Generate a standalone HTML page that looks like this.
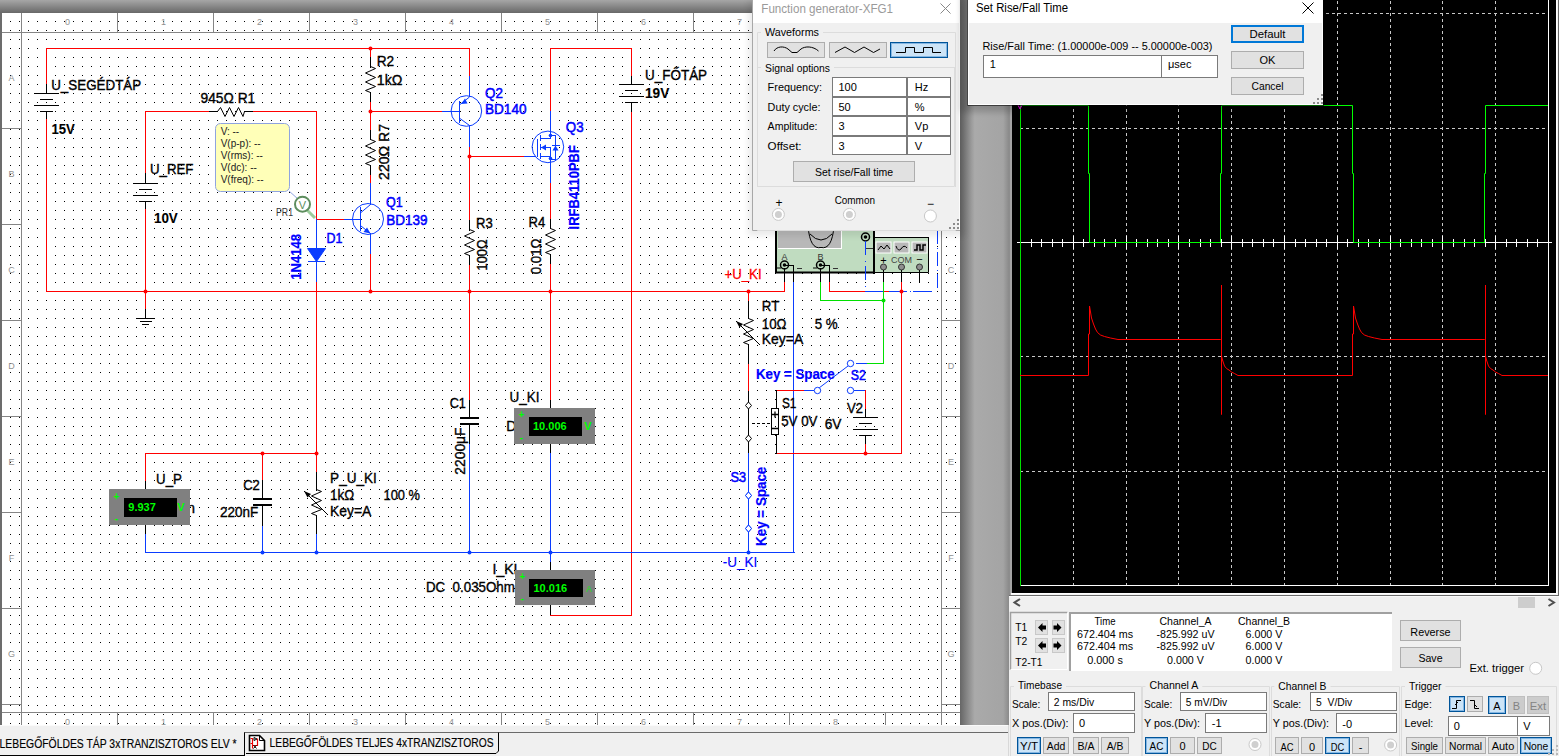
<!DOCTYPE html><html><head><meta charset="utf-8"><style>html,body{margin:0;padding:0;width:1559px;height:756px;overflow:hidden;background:#f0f0f0;font-family:"Liberation Sans",sans-serif}svg{display:block}text{font-family:"Liberation Sans",sans-serif}</style></head><body><svg width="1559" height="756" viewBox="0 0 1559 756" shape-rendering="auto"><defs><filter id="sh" x="-10%" y="-10%" width="120%" height="120%"><feGaussianBlur stdDeviation="3"/></filter></defs><rect x="0" y="0" width="1559" height="756" fill="#f0f0f0" />
<defs><linearGradient id="topbar" x1="0" y1="0" x2="0" y2="1"><stop offset="0" stop-color="#a6a6a6"/><stop offset="1" stop-color="#686868"/></linearGradient><linearGradient id="gapg" x1="0" y1="0" x2="1" y2="0"><stop offset="0" stop-color="#666"/><stop offset="0.3" stop-color="#aaa"/><stop offset="0.88" stop-color="#a4a4a4"/><stop offset="1" stop-color="#8a8a8a"/></linearGradient><pattern id="dots" x="10" y="3" width="9" height="9" patternUnits="userSpaceOnUse"><rect width="1" height="1" fill="#000"/></pattern></defs>
<rect x="0" y="0" width="960" height="13" fill="url(#topbar)" />
<rect x="0" y="13" width="2" height="712" fill="#6c6c6c" />
<rect x="2" y="13" width="958" height="712" fill="#ffffff" />
<rect x="2" y="13" width="958" height="712" fill="url(#dots)" />
<rect x="21" y="13" width="1" height="712" fill="#858585" />
<rect x="941" y="13" width="1" height="712" fill="#858585" />
<rect x="2" y="32" width="958" height="1" fill="#858585" />
<rect x="2" y="712" width="958" height="1" fill="#858585" />
<rect x="117" y="13" width="1" height="19" fill="#858585" />
<rect x="117" y="713" width="1" height="12" fill="#858585" />
<rect x="213" y="13" width="1" height="19" fill="#858585" />
<rect x="213" y="713" width="1" height="12" fill="#858585" />
<rect x="309" y="13" width="1" height="19" fill="#858585" />
<rect x="309" y="713" width="1" height="12" fill="#858585" />
<rect x="405" y="13" width="1" height="19" fill="#858585" />
<rect x="405" y="713" width="1" height="12" fill="#858585" />
<rect x="501" y="13" width="1" height="19" fill="#858585" />
<rect x="501" y="713" width="1" height="12" fill="#858585" />
<rect x="597" y="13" width="1" height="19" fill="#858585" />
<rect x="597" y="713" width="1" height="12" fill="#858585" />
<rect x="693" y="13" width="1" height="19" fill="#858585" />
<rect x="693" y="713" width="1" height="12" fill="#858585" />
<rect x="789" y="13" width="1" height="19" fill="#858585" />
<rect x="789" y="713" width="1" height="12" fill="#858585" />
<rect x="885" y="13" width="1" height="19" fill="#858585" />
<rect x="885" y="713" width="1" height="12" fill="#858585" />
<text x="67.5" y="24.5" font-size="9" fill="#909090" font-family="Liberation Sans" text-anchor="middle" >0</text>
<text x="67.5" y="724.5" font-size="9" fill="#909090" font-family="Liberation Sans" text-anchor="middle" >0</text>
<text x="163.5" y="24.5" font-size="9" fill="#909090" font-family="Liberation Sans" text-anchor="middle" >1</text>
<text x="163.5" y="724.5" font-size="9" fill="#909090" font-family="Liberation Sans" text-anchor="middle" >1</text>
<text x="259.5" y="24.5" font-size="9" fill="#909090" font-family="Liberation Sans" text-anchor="middle" >2</text>
<text x="259.5" y="724.5" font-size="9" fill="#909090" font-family="Liberation Sans" text-anchor="middle" >2</text>
<text x="355.5" y="24.5" font-size="9" fill="#909090" font-family="Liberation Sans" text-anchor="middle" >3</text>
<text x="355.5" y="724.5" font-size="9" fill="#909090" font-family="Liberation Sans" text-anchor="middle" >3</text>
<text x="451.5" y="24.5" font-size="9" fill="#909090" font-family="Liberation Sans" text-anchor="middle" >4</text>
<text x="451.5" y="724.5" font-size="9" fill="#909090" font-family="Liberation Sans" text-anchor="middle" >4</text>
<text x="547.5" y="24.5" font-size="9" fill="#909090" font-family="Liberation Sans" text-anchor="middle" >5</text>
<text x="547.5" y="724.5" font-size="9" fill="#909090" font-family="Liberation Sans" text-anchor="middle" >5</text>
<text x="643.5" y="24.5" font-size="9" fill="#909090" font-family="Liberation Sans" text-anchor="middle" >6</text>
<text x="643.5" y="724.5" font-size="9" fill="#909090" font-family="Liberation Sans" text-anchor="middle" >6</text>
<text x="739.5" y="24.5" font-size="9" fill="#909090" font-family="Liberation Sans" text-anchor="middle" >7</text>
<text x="739.5" y="724.5" font-size="9" fill="#909090" font-family="Liberation Sans" text-anchor="middle" >7</text>
<text x="835.5" y="24.5" font-size="9" fill="#909090" font-family="Liberation Sans" text-anchor="middle" >8</text>
<text x="835.5" y="724.5" font-size="9" fill="#909090" font-family="Liberation Sans" text-anchor="middle" >8</text>
<rect x="2" y="128" width="19" height="1" fill="#858585" />
<rect x="942" y="128" width="18" height="1" fill="#858585" />
<rect x="2" y="224" width="19" height="1" fill="#858585" />
<rect x="942" y="224" width="18" height="1" fill="#858585" />
<rect x="2" y="320" width="19" height="1" fill="#858585" />
<rect x="942" y="320" width="18" height="1" fill="#858585" />
<rect x="2" y="416" width="19" height="1" fill="#858585" />
<rect x="942" y="416" width="18" height="1" fill="#858585" />
<rect x="2" y="512" width="19" height="1" fill="#858585" />
<rect x="942" y="512" width="18" height="1" fill="#858585" />
<rect x="2" y="608" width="19" height="1" fill="#858585" />
<rect x="942" y="608" width="18" height="1" fill="#858585" />
<rect x="2" y="704" width="19" height="1" fill="#858585" />
<rect x="942" y="704" width="18" height="1" fill="#858585" />
<text x="11.5" y="80.5" font-size="9" fill="#909090" font-family="Liberation Sans" text-anchor="middle" >A</text>
<text x="951" y="80.5" font-size="9" fill="#909090" font-family="Liberation Sans" text-anchor="middle" >A</text>
<text x="11.5" y="176.5" font-size="9" fill="#909090" font-family="Liberation Sans" text-anchor="middle" >B</text>
<text x="951" y="176.5" font-size="9" fill="#909090" font-family="Liberation Sans" text-anchor="middle" >B</text>
<text x="11.5" y="272.5" font-size="9" fill="#909090" font-family="Liberation Sans" text-anchor="middle" >C</text>
<text x="951" y="272.5" font-size="9" fill="#909090" font-family="Liberation Sans" text-anchor="middle" >C</text>
<text x="11.5" y="368.5" font-size="9" fill="#909090" font-family="Liberation Sans" text-anchor="middle" >D</text>
<text x="951" y="368.5" font-size="9" fill="#909090" font-family="Liberation Sans" text-anchor="middle" >D</text>
<text x="11.5" y="464.5" font-size="9" fill="#909090" font-family="Liberation Sans" text-anchor="middle" >E</text>
<text x="951" y="464.5" font-size="9" fill="#909090" font-family="Liberation Sans" text-anchor="middle" >E</text>
<text x="11.5" y="560.5" font-size="9" fill="#909090" font-family="Liberation Sans" text-anchor="middle" >F</text>
<text x="951" y="560.5" font-size="9" fill="#909090" font-family="Liberation Sans" text-anchor="middle" >F</text>
<text x="11.5" y="656.5" font-size="9" fill="#909090" font-family="Liberation Sans" text-anchor="middle" >G</text>
<text x="951" y="656.5" font-size="9" fill="#909090" font-family="Liberation Sans" text-anchor="middle" >G</text>
<rect x="46" y="48" width="424" height="1" fill="#ff0000" />
<rect x="550" y="48" width="82" height="1" fill="#ff0000" />
<rect x="46" y="48" width="1" height="37" fill="#ff0000" />
<rect x="46" y="84" width="1" height="9" fill="#000000" />
<rect x="34" y="93" width="25" height="1" fill="#000000" />
<rect x="40" y="99" width="13" height="1" fill="#000000" />
<rect x="34" y="105" width="25" height="1" fill="#000000" />
<rect x="40" y="111" width="13" height="1" fill="#000000" />
<rect x="46" y="111" width="1" height="9" fill="#000000" />
<rect x="46" y="119" width="1" height="173" fill="#ff0000" />
<rect x="46" y="291" width="739" height="1" fill="#ff0000" />
<rect x="145" y="111" width="65" height="1" fill="#ff0000" />
<rect x="145" y="111" width="1" height="63" fill="#ff0000" />
<rect x="145" y="173" width="1" height="10" fill="#000000" />
<rect x="133" y="183" width="25" height="1" fill="#000000" />
<rect x="139" y="189" width="13" height="1" fill="#000000" />
<rect x="133" y="195" width="25" height="1" fill="#000000" />
<rect x="139" y="201" width="13" height="1" fill="#000000" />
<rect x="145" y="201" width="1" height="9" fill="#000000" />
<rect x="145" y="209" width="1" height="101" fill="#ff0000" />
<rect x="145" y="309" width="1" height="10" fill="#000000" />
<rect x="136" y="318" width="19" height="1" fill="#000000" />
<rect x="140" y="321" width="12" height="1" fill="#000000" />
<rect x="142" y="324" width="7" height="1" fill="#000000" />
<circle cx="145.5" cy="291.5" r="2.0" fill="#ff0000"/>
<rect x="209" y="111" width="9" height="1" fill="#000000" />
<path d="M217.5 111.5 L220.5 107.5 L225.0 116.5 L229.5 107.5 L234.0 116.5 L238.5 107.5 L243.0 116.5 L244.5 111.5" stroke="#000000" stroke-width="1" fill="none" />
<rect x="244" y="111" width="10" height="1" fill="#000000" />
<rect x="253" y="111" width="64" height="1" fill="#ff0000" />
<rect x="316" y="111" width="1" height="109" fill="#ff0000" />
<rect x="316" y="219" width="29" height="1" fill="#ff0000" />
<rect x="344" y="219" width="17" height="1" fill="#0a3cff" />
<rect x="316" y="219" width="1" height="30" fill="#0a3cff" />
<path d="M307.5 248.5 L325.5 248.5 L316.5 261.5 Z" fill="#0a3cff" stroke="#0a3cff" stroke-width="1"/>
<rect x="308" y="261" width="17" height="1" fill="#0a3cff" />
<rect x="316" y="261" width="1" height="22" fill="#0a3cff" />
<rect x="316" y="282" width="1" height="172" fill="#ff0000" />
<circle cx="370.5" cy="48.5" r="2.0" fill="#ff0000"/>
<rect x="370" y="48" width="1" height="10" fill="#ff0000" />
<rect x="370" y="57" width="1" height="11" fill="#000000" />
<path d="M370.5 66.5 L375.5 68.5 L365.5 73.0 L375.5 77.5 L365.5 82.0 L375.5 86.5 L365.5 90.5 L370.5 92.5" stroke="#000000" stroke-width="1" fill="none" />
<rect x="370" y="92" width="1" height="11" fill="#000000" />
<rect x="370" y="102" width="1" height="10" fill="#ff0000" />
<circle cx="370.5" cy="111.5" r="2.0" fill="#ff0000"/>
<rect x="370" y="111" width="73" height="1" fill="#ff0000" />
<rect x="442" y="111" width="18" height="1" fill="#0a3cff" />
<rect x="370" y="111" width="1" height="20" fill="#ff0000" />
<rect x="370" y="130" width="1" height="10" fill="#000000" />
<path d="M370.5 139.5 L375.5 141.5 L365.5 146.0 L375.5 150.5 L365.5 155.0 L375.5 159.5 L365.5 163.5 L370.5 165.5" stroke="#000000" stroke-width="1" fill="none" />
<rect x="370" y="165" width="1" height="11" fill="#000000" />
<rect x="370" y="175" width="1" height="9" fill="#ff0000" />
<rect x="370" y="183" width="1" height="22" fill="#0a3cff" />
<circle cx="368" cy="219" r="15.5" fill="none" stroke="#0a3cff" stroke-width="1"/>
<rect x="360" y="207" width="1" height="24" fill="#0a3cff" />
<path d="M361 212.5 L370.5 204.5" stroke="#0a3cff" stroke-width="1" fill="none" />
<path d="M361 226 L370.5 233.5" stroke="#0a3cff" stroke-width="1" fill="none" />
<path d="M370.5 233.5 L363.5 232 L367 227.5 Z" fill="#0a3cff"/>
<rect x="370" y="233" width="1" height="22" fill="#0a3cff" />
<rect x="370" y="254" width="1" height="38" fill="#ff0000" />
<circle cx="370.5" cy="291.5" r="2.0" fill="#ff0000"/>
<rect x="469" y="48" width="1" height="29" fill="#ff0000" />
<rect x="469" y="76" width="1" height="21" fill="#0a3cff" />
<circle cx="466.4" cy="111" r="15.3" fill="none" stroke="#0a3cff" stroke-width="1"/>
<rect x="459" y="101" width="1" height="22" fill="#0a3cff" />
<path d="M460 104.5 L469.5 97" stroke="#0a3cff" stroke-width="1" fill="none" />
<path d="M461 104 L467.5 103.5 L465 98.5 Z" fill="#0a3cff"/>
<path d="M460 118.5 L469.5 125.5" stroke="#0a3cff" stroke-width="1" fill="none" />
<rect x="469" y="125" width="1" height="23" fill="#0a3cff" />
<rect x="469" y="147" width="1" height="74" fill="#ff0000" />
<circle cx="469.5" cy="156.5" r="2.0" fill="#ff0000"/>
<rect x="469" y="156" width="56" height="1" fill="#ff0000" />
<rect x="524" y="156" width="12" height="1" fill="#0a3cff" />
<rect x="469" y="220" width="1" height="11" fill="#000000" />
<path d="M469.5 229.5 L474.5 231.5 L464.5 236.0 L474.5 240.5 L464.5 245.0 L474.5 249.5 L464.5 253.5 L469.5 255.5" stroke="#000000" stroke-width="1" fill="none" />
<rect x="469" y="255" width="1" height="11" fill="#000000" />
<rect x="469" y="265" width="1" height="136" fill="#ff0000" />
<circle cx="469.5" cy="291.5" r="2.0" fill="#ff0000"/>
<rect x="469" y="400" width="1" height="18" fill="#000000" />
<rect x="460" y="417" width="19" height="2" fill="#000000" />
<rect x="460" y="423" width="19" height="2" fill="#000000" />
<rect x="469" y="425" width="1" height="20" fill="#000000" />
<rect x="469" y="444" width="1" height="109" fill="#0a3cff" />
<rect x="550" y="48" width="1" height="64" fill="#ff0000" />
<rect x="550" y="111" width="1" height="25" fill="#0a3cff" />
<circle cx="547.9" cy="146.9" r="15.8" fill="none" stroke="#0a3cff" stroke-width="1"/>
<rect x="537" y="139" width="1" height="18" fill="#0a3cff" />
<rect x="540" y="135" width="1" height="6" fill="#0a3cff" />
<rect x="540" y="144" width="1" height="6" fill="#0a3cff" />
<rect x="540" y="153" width="1" height="6" fill="#0a3cff" />
<rect x="540" y="138" width="11" height="1" fill="#0a3cff" />
<rect x="550" y="135" width="1" height="4" fill="#0a3cff" />
<rect x="541" y="147" width="10" height="1" fill="#0a3cff" />
<rect x="550" y="147" width="1" height="13" fill="#0a3cff" />
<path d="M541 147.5 L546 144.5 L546 150.5 Z" fill="#0a3cff"/>
<rect x="540" y="156" width="11" height="1" fill="#0a3cff" />
<circle cx="550.5" cy="135.5" r="1.8" fill="#0a3cff"/>
<circle cx="550.5" cy="158.5" r="1.8" fill="#0a3cff"/>
<rect x="555" y="135" width="1" height="25" fill="#0a3cff" />
<rect x="550" y="135" width="6" height="1" fill="#0a3cff" />
<rect x="550" y="159" width="6" height="1" fill="#0a3cff" />
<path d="M552.5 150.5 L558.5 150.5 L555.5 145.5 Z" fill="#0a3cff"/>
<rect x="552" y="145" width="8" height="1" fill="#0a3cff" />
<rect x="550" y="158" width="1" height="26" fill="#0a3cff" />
<rect x="550" y="183" width="1" height="37" fill="#ff0000" />
<rect x="550" y="219" width="1" height="10" fill="#000000" />
<path d="M550.5 228.5 L555.5 230.5 L545.5 235.0 L555.5 239.5 L545.5 244.0 L555.5 248.5 L545.5 252.5 L550.5 254.5" stroke="#000000" stroke-width="1" fill="none" />
<rect x="550" y="254" width="1" height="11" fill="#000000" />
<rect x="550" y="264" width="1" height="137" fill="#ff0000" />
<circle cx="550.5" cy="291.5" r="2.0" fill="#ff0000"/>
<rect x="550" y="400" width="1" height="9" fill="#000000" />
<rect x="550" y="444" width="1" height="10" fill="#000000" />
<rect x="550" y="453" width="1" height="110" fill="#0a3cff" />
<rect x="550" y="562" width="1" height="9" fill="#000000" />
<rect x="550" y="605" width="1" height="11" fill="#000000" />
<rect x="550" y="615" width="82" height="1" fill="#ff0000" />
<rect x="631" y="48" width="1" height="29" fill="#ff0000" />
<rect x="631" y="76" width="1" height="9" fill="#000000" />
<rect x="619" y="84" width="25" height="1" fill="#000000" />
<rect x="625" y="90" width="13" height="1" fill="#000000" />
<rect x="619" y="96" width="25" height="1" fill="#000000" />
<rect x="625" y="102" width="13" height="1" fill="#000000" />
<rect x="631" y="103" width="1" height="10" fill="#000000" />
<rect x="631" y="112" width="1" height="504" fill="#ff0000" />
<rect x="145" y="552" width="650" height="1" fill="#0a3cff" />
<circle cx="262.5" cy="552.5" r="2.0" fill="#0a3cff"/>
<circle cx="316.5" cy="552.5" r="2.0" fill="#0a3cff"/>
<circle cx="469.5" cy="552.5" r="2.0" fill="#0a3cff"/>
<circle cx="550.5" cy="552.5" r="2.0" fill="#0a3cff"/>
<circle cx="748.5" cy="552.5" r="2.0" fill="#0a3cff"/>
<rect x="145" y="453" width="172" height="1" fill="#ff0000" />
<circle cx="262.5" cy="453.5" r="2.0" fill="#ff0000"/>
<circle cx="316.5" cy="453.5" r="2.0" fill="#ff0000"/>
<rect x="145" y="453" width="1" height="29" fill="#ff0000" />
<rect x="145" y="481" width="1" height="9" fill="#000000" />
<rect x="145" y="525" width="1" height="10" fill="#000000" />
<rect x="145" y="534" width="1" height="19" fill="#0a3cff" />
<rect x="262" y="453" width="1" height="28" fill="#ff0000" />
<rect x="262" y="480" width="1" height="19" fill="#000000" />
<rect x="253" y="498" width="19" height="2" fill="#000000" />
<rect x="253" y="504" width="19" height="2" fill="#000000" />
<rect x="262" y="506" width="1" height="21" fill="#000000" />
<rect x="262" y="526" width="1" height="27" fill="#0a3cff" />
<rect x="316" y="453" width="1" height="20" fill="#ff0000" />
<rect x="316" y="472" width="1" height="19" fill="#000000" />
<path d="M316.5 489.5 L321.5 491.5 L311.5 496.0 L321.5 500.5 L311.5 505.0 L321.5 509.5 L311.5 513.5 L316.5 515.5" stroke="#000000" stroke-width="1" fill="none" />
<rect x="316" y="515" width="1" height="20" fill="#000000" />
<rect x="316" y="534" width="1" height="19" fill="#0a3cff" />
<path d="M304 491 L328 515" stroke="#000000" stroke-width="1" fill="none" />
<path d="M304 491 L311 494 L307.5 497.5 Z" fill="#000"/>
<circle cx="748.5" cy="291.5" r="2.0" fill="#ff0000"/>
<rect x="748" y="291" width="1" height="11" fill="#ff0000" />
<rect x="748" y="301" width="1" height="18" fill="#000000" />
<path d="M748.5 318.5 L753.5 320.5 L743.5 325.0 L753.5 329.5 L743.5 334.0 L753.5 338.5 L743.5 342.5 L748.5 344.5" stroke="#000000" stroke-width="1" fill="none" />
<rect x="748" y="344" width="1" height="21" fill="#000000" />
<rect x="748" y="364" width="1" height="28" fill="#ff0000" />
<rect x="748" y="391" width="1" height="63" fill="#000000" />
<path d="M736 321 L760 345" stroke="#000000" stroke-width="1" fill="none" />
<path d="M736 321 L743 324 L739.5 327.5 Z" fill="#000"/>
<path d="M748.5 402 L751.5 405.5 L748.5 409 L745.5 405.5 Z" fill="#fff" stroke="#000000" stroke-width="1"/>
<path d="M748.5 435 L751.5 438.5 L748.5 442 L745.5 438.5 Z" fill="#fff" stroke="#000000" stroke-width="1"/>
<path d="M748.5 492 L751.5 495.5 L748.5 499 L745.5 495.5 Z" fill="#fff" stroke="#0a3cff" stroke-width="1"/>
<path d="M748.5 525 L751.5 528.5 L748.5 532 L745.5 528.5 Z" fill="#fff" stroke="#0a3cff" stroke-width="1"/>
<rect x="748" y="453" width="1" height="100" fill="#0a3cff" />
<path d="M748.5 492 L751.5 495.5 L748.5 499 L745.5 495.5 Z" fill="#fff" stroke="#0a3cff" stroke-width="1"/>
<path d="M748.5 525 L751.5 528.5 L748.5 532 L745.5 528.5 Z" fill="#fff" stroke="#0a3cff" stroke-width="1"/>
<rect x="775" y="200" width="99" height="73" fill="#c0dcc0" />
<path d="M776 200 L776 272.5 L874 272.5 L874 200" stroke="#000" stroke-width="2" fill="none" />
<rect x="778" y="200" width="63" height="48" fill="#b8b8b8" />
<rect x="778" y="248" width="64" height="1" fill="#ffffff" />
<rect x="841" y="200" width="1" height="49" fill="#ffffff" />
<path d="M808 226 Q 810 250 821 247.5 Q 832 250 834 226" stroke="#000" stroke-width="1" fill="none" />
<path d="M810 234 Q 821 246 832 234" stroke="#000" stroke-width="1" fill="none" />
<circle cx="784.5" cy="265" r="4" fill="#c0dcc0" stroke="#000" stroke-width="1.5"/><circle cx="784.5" cy="265" r="1.8" fill="#000"/>
<circle cx="820.5" cy="265" r="4" fill="#c0dcc0" stroke="#000" stroke-width="1.5"/><circle cx="820.5" cy="265" r="1.8" fill="#000"/>
<text x="784.5" y="260" font-size="9" fill="#333" font-family="Liberation Sans" text-anchor="middle" >A</text>
<text x="820.5" y="260" font-size="9" fill="#333" font-family="Liberation Sans" text-anchor="middle" >B</text>
<rect x="785" y="265" width="9" height="1" fill="#000000" />
<rect x="821" y="265" width="9" height="1" fill="#000000" />
<path d="M777 268 L781 268" stroke="#000" stroke-width="1" fill="none" />
<path d="M813 268 L817 268" stroke="#000" stroke-width="1" fill="none" />
<rect x="797" y="268" width="5" height="1" fill="#333" />
<rect x="833" y="268" width="5" height="1" fill="#333" />
<circle cx="865.5" cy="237" r="4" fill="#c0dcc0" stroke="#000" stroke-width="1.5"/><circle cx="865.5" cy="237" r="1.8" fill="#000"/>
<rect x="865" y="248" width="10" height="1" fill="#333" />
<rect x="874" y="237" width="54" height="36" fill="#c0dcc0" />
<path d="M874 237.5 L928.5 237.5 L928.5 272.5 L874 272.5" stroke="#000" stroke-width="1" fill="none" />
<rect x="873" y="237" width="2" height="37" fill="#000" />
<rect x="876" y="242" width="15" height="11" fill="#b8b8b8" stroke="#fff" stroke-width="1"/>
<rect x="894" y="242" width="15" height="11" fill="#b8b8b8" stroke="#fff" stroke-width="1"/>
<rect x="912" y="242" width="15" height="11" fill="#b8b8b8" stroke="#fff" stroke-width="1"/>
<path d="M878 250 L881 246 L884 249 L887 245 L890 249" stroke="#000" stroke-width="1" fill="none" />
<path d="M896 246 Q898 252 901 249 Q904 244 907 248" stroke="#000" stroke-width="1" fill="none" />
<path d="M914 250 L917 250 L917 245 L920 245 L920 250 L923 250 L923 245 L926 245" stroke="#000" stroke-width="1.5" fill="none" />
<text x="883.5" y="264" font-size="11" fill="#000" font-family="Liberation Sans" text-anchor="middle" >+</text>
<text x="901.5" y="263" font-size="9" fill="#444" font-family="Liberation Sans" text-anchor="middle" >COM</text>
<text x="919.5" y="263" font-size="11" fill="#000" font-family="Liberation Sans" text-anchor="middle" >−</text>
<circle cx="883.5" cy="267" r="3" fill="#909090" stroke="#333" stroke-width="1"/>
<rect x="883" y="270" width="1" height="13" fill="#000000" />
<circle cx="901.5" cy="267" r="3" fill="#909090" stroke="#333" stroke-width="1"/>
<rect x="901" y="270" width="1" height="13" fill="#000000" />
<circle cx="919.5" cy="267" r="3" fill="#909090" stroke="#333" stroke-width="1"/>
<rect x="919" y="270" width="1" height="13" fill="#000000" />
<rect x="784" y="268" width="1" height="15" fill="#000000" />
<rect x="784" y="282" width="1" height="10" fill="#ff0000" />
<rect x="793" y="265" width="1" height="18" fill="#000000" />
<rect x="793" y="282" width="1" height="271" fill="#0a3cff" />
<rect x="820" y="268" width="1" height="15" fill="#000000" />
<rect x="820" y="282" width="1" height="19" fill="#00e000" />
<rect x="820" y="300" width="64" height="1" fill="#00e000" />
<circle cx="883.5" cy="300.5" r="2.0" fill="#00e000"/>
<rect x="829" y="265" width="1" height="18" fill="#000000" />
<rect x="829" y="282" width="1" height="10" fill="#ff0000" />
<rect x="829" y="291" width="37" height="1" fill="#ff0000" />
<rect x="865" y="291" width="19" height="1" fill="#0a3cff" />
<rect x="883" y="291" width="7" height="1" fill="#ff0000" />
<rect x="889" y="291" width="18" height="1" fill="#0a3cff" />
<rect x="910" y="291" width="1" height="1" fill="#0a3cff" />
<rect x="913" y="291" width="19" height="1" fill="#0a3cff" />
<path d="M865.5 241 V291" stroke="#0a3cff" stroke-width="1" stroke-dasharray="14 6 1 4"/>
<path d="M937.5 230 V291" stroke="#0a3cff" stroke-width="1" stroke-dasharray="14 4 1 3"/>
<rect x="883" y="282" width="1" height="82" fill="#00e000" />
<rect x="901" y="282" width="1" height="172" fill="#ff0000" />
<circle cx="901.5" cy="291.5" r="2.0" fill="#ff0000"/>
<rect x="866" y="363" width="18" height="1" fill="#00e000" />
<rect x="856" y="363" width="11" height="1" fill="#0a3cff" />
<circle cx="850.5" cy="363.5" r="3.2" fill="#fff" stroke="#0a3cff"/>
<path d="M848 366 L819 388" stroke="#0a3cff" stroke-width="1" fill="none" />
<circle cx="817.5" cy="390.5" r="3.2" fill="#fff" stroke="#0a3cff"/>
<circle cx="850.5" cy="390.5" r="3.2" fill="#fff" stroke="#0a3cff"/>
<rect x="803" y="390" width="11" height="1" fill="#0a3cff" />
<rect x="776" y="390" width="28" height="1" fill="#ff0000" />
<rect x="854" y="390" width="12" height="1" fill="#0a3cff" />
<rect x="865" y="390" width="1" height="20" fill="#ff0000" />
<rect x="865" y="409" width="1" height="9" fill="#000000" />
<rect x="853" y="417" width="25" height="1" fill="#000000" />
<rect x="859" y="423" width="13" height="1" fill="#000000" />
<rect x="853" y="429" width="25" height="1" fill="#000000" />
<rect x="859" y="435" width="13" height="1" fill="#000000" />
<rect x="865" y="436" width="1" height="9" fill="#000000" />
<rect x="865" y="444" width="1" height="10" fill="#ff0000" />
<circle cx="865.5" cy="453.5" r="2.0" fill="#ff0000"/>
<rect x="776" y="453" width="126" height="1" fill="#ff0000" />
<rect x="776" y="390" width="1" height="19" fill="#000000" />
<rect x="776" y="434" width="1" height="20" fill="#000000" />
<rect x="771.5" y="408.5" width="7" height="26" fill="none" stroke="#000" stroke-width="1"/>
<path d="M772 414.5 H778 M775 411.5 V417.5 M772 428.5 H778" stroke="#000" stroke-width="1.3" fill="none" />
<path d="M752 423.5 H771" stroke="#000" stroke-width="1" stroke-dasharray="3 2"/>
<rect x="215.5" y="123.5" width="74" height="68" rx="5" fill="#ffffb8" stroke="#8fa4e0" stroke-width="1"/>
<text x="220.7" y="134.8" font-size="10" fill="#222" font-family="Liberation Sans" >V: --</text>
<text x="220.7" y="146.8" font-size="10" fill="#222" font-family="Liberation Sans" >V(p-p): --</text>
<text x="220.7" y="158.8" font-size="10" fill="#222" font-family="Liberation Sans" >V(rms): --</text>
<text x="220.7" y="170.8" font-size="10" fill="#222" font-family="Liberation Sans" >V(dc): --</text>
<text x="220.7" y="182.8" font-size="10" fill="#222" font-family="Liberation Sans" >V(freq): --</text>
<path d="M289 191 L298 199" stroke="#8fa4e0" stroke-width="1" fill="none" />
<path d="M307 210 L315 218" stroke="#9ccc9c" stroke-width="3" fill="none" />
<circle cx="302.5" cy="204.2" r="7.5" fill="#fff" stroke="#5e8e5e" stroke-width="2"/>
<text x="302.5" y="208.5" font-size="11" fill="#5e8e5e" font-family="Liberation Sans" text-anchor="middle" >V</text>
<text x="276" y="215.8" font-size="10" fill="#333" font-family="Liberation Sans" textLength="17" lengthAdjust="spacingAndGlyphs" >PR1</text>
<text x="51.2" y="89.6" font-size="14" fill="#000" font-family="Liberation Sans" textLength="90" lengthAdjust="spacingAndGlyphs" stroke="#000" stroke-width="0.35">U_SEGÉDTÁP</text>
<text x="51.5" y="134.4" font-size="14" fill="#000" font-family="Liberation Sans" textLength="23.4" lengthAdjust="spacingAndGlyphs" font-weight="bold" stroke="#000" stroke-width="0.1">15V</text>
<text x="200.5" y="102.7" font-size="14" fill="#000" font-family="Liberation Sans" textLength="54.8" lengthAdjust="spacingAndGlyphs" stroke="#000" stroke-width="0.35">945Ω R1</text>
<text x="149.9" y="173.6" font-size="14" fill="#000" font-family="Liberation Sans" textLength="43.6" lengthAdjust="spacingAndGlyphs" stroke="#000" stroke-width="0.35">U_REF</text>
<text x="154.0" y="223" font-size="14" fill="#000" font-family="Liberation Sans" textLength="23.8" lengthAdjust="spacingAndGlyphs" font-weight="bold" stroke="#000" stroke-width="0.1">10V</text>
<text x="376.7" y="66.4" font-size="14" fill="#000" font-family="Liberation Sans" textLength="17.5" lengthAdjust="spacingAndGlyphs" stroke="#000" stroke-width="0.35">R2</text>
<text x="376.7" y="84.5" font-size="14" fill="#000" font-family="Liberation Sans" textLength="25.8" lengthAdjust="spacingAndGlyphs" stroke="#000" stroke-width="0.35">1kΩ</text>
<text x="476.1" y="228.4" font-size="14" fill="#000" font-family="Liberation Sans" textLength="16.7" lengthAdjust="spacingAndGlyphs" stroke="#000" stroke-width="0.35">R3</text>
<text x="528.6" y="226.6" font-size="14" fill="#000" font-family="Liberation Sans" textLength="16.7" lengthAdjust="spacingAndGlyphs" stroke="#000" stroke-width="0.35">R4</text>
<text x="645.0" y="80.2" font-size="14" fill="#000" font-family="Liberation Sans" textLength="62.1" lengthAdjust="spacingAndGlyphs" stroke="#000" stroke-width="0.35">U_FŐTÁP</text>
<text x="645.0" y="98.1" font-size="14" fill="#000" font-family="Liberation Sans" textLength="24.3" lengthAdjust="spacingAndGlyphs" font-weight="bold" stroke="#000" stroke-width="0.1">19V</text>
<text x="156.1" y="483.9" font-size="14" fill="#000" font-family="Liberation Sans" textLength="25.8" lengthAdjust="spacingAndGlyphs" stroke="#000" stroke-width="0.35">U_P</text>
<text x="243.2" y="489.6" font-size="14" fill="#000" font-family="Liberation Sans" textLength="16.7" lengthAdjust="spacingAndGlyphs" stroke="#000" stroke-width="0.35">C2</text>
<text x="220.1" y="516.9" font-size="14" fill="#000" font-family="Liberation Sans" textLength="38.2" lengthAdjust="spacingAndGlyphs" stroke="#000" stroke-width="0.35">220nF</text>
<text x="330.1" y="482.6" font-size="14" fill="#000" font-family="Liberation Sans" textLength="46.8" lengthAdjust="spacingAndGlyphs" stroke="#000" stroke-width="0.35">P_U_KI</text>
<text x="330.1" y="500.3" font-size="14" fill="#000" font-family="Liberation Sans" textLength="24.1" lengthAdjust="spacingAndGlyphs" stroke="#000" stroke-width="0.35">1kΩ</text>
<text x="383.5" y="500.3" font-size="14" fill="#000" font-family="Liberation Sans" textLength="36.4" lengthAdjust="spacingAndGlyphs" stroke="#000" stroke-width="0.35">100 %</text>
<text x="330.1" y="515.5" font-size="14" fill="#000" font-family="Liberation Sans" textLength="41.2" lengthAdjust="spacingAndGlyphs" stroke="#000" stroke-width="0.35">Key=A</text>
<text x="449.7" y="408.4" font-size="14" fill="#000" font-family="Liberation Sans" textLength="16.2" lengthAdjust="spacingAndGlyphs" stroke="#000" stroke-width="0.35">C1</text>
<text x="509.5" y="402" font-size="14" fill="#000" font-family="Liberation Sans" textLength="29.9" lengthAdjust="spacingAndGlyphs" stroke="#000" stroke-width="0.35">U_KI</text>
<text x="506.3" y="431.2" font-size="14" fill="#000" font-family="Liberation Sans" textLength="10" lengthAdjust="spacingAndGlyphs" stroke="#000" stroke-width="0.35">D</text>
<text x="492.5" y="574" font-size="14" fill="#000" font-family="Liberation Sans" textLength="25" lengthAdjust="spacingAndGlyphs" stroke="#000" stroke-width="0.35">I_KI</text>
<text x="425.9" y="592.2" font-size="14" fill="#000" font-family="Liberation Sans" textLength="89" lengthAdjust="spacingAndGlyphs" stroke="#000" stroke-width="0.35">DC  0.035Ohm</text>
<text x="761.8" y="311.1" font-size="14" fill="#000" font-family="Liberation Sans" textLength="17.5" lengthAdjust="spacingAndGlyphs" stroke="#000" stroke-width="0.35">RT</text>
<text x="761.8" y="329.2" font-size="14" fill="#000" font-family="Liberation Sans" textLength="24.7" lengthAdjust="spacingAndGlyphs" stroke="#000" stroke-width="0.35">10Ω</text>
<text x="814.7" y="329.2" font-size="14" fill="#000" font-family="Liberation Sans" textLength="23" lengthAdjust="spacingAndGlyphs" stroke="#000" stroke-width="0.35">5 %</text>
<text x="761.8" y="343.8" font-size="14" fill="#000" font-family="Liberation Sans" textLength="41.4" lengthAdjust="spacingAndGlyphs" stroke="#000" stroke-width="0.35">Key=A</text>
<text x="782.0" y="408" font-size="14" fill="#000" font-family="Liberation Sans" textLength="14.4" lengthAdjust="spacingAndGlyphs" stroke="#000" stroke-width="0.35">S1</text>
<text x="781.2" y="426" font-size="14" fill="#000" font-family="Liberation Sans" textLength="36.3" lengthAdjust="spacingAndGlyphs" stroke="#000" stroke-width="0.35">5V 0V</text>
<text x="824.7" y="429" font-size="14" fill="#000" font-family="Liberation Sans" textLength="16.8" lengthAdjust="spacingAndGlyphs" stroke="#000" stroke-width="0.35">6V</text>
<text x="847.0" y="413.1" font-size="14" fill="#000" font-family="Liberation Sans" textLength="16" lengthAdjust="spacingAndGlyphs" stroke="#000" stroke-width="0.35">V2</text>
<text x="187.0" y="513" font-size="14" fill="#000" font-family="Liberation Sans" textLength="8" lengthAdjust="spacingAndGlyphs" stroke="#000" stroke-width="0.35">n</text>
<text x="389.3" y="179.9" font-size="14" fill="#000" font-family="Liberation Sans" textLength="55.900000000000006" lengthAdjust="spacingAndGlyphs" transform="rotate(-90 389.3 179.9)" stroke="#000" stroke-width="0.35">220Ω R7</text>
<text x="487.4" y="270.5" font-size="14" fill="#000" font-family="Liberation Sans" textLength="31" lengthAdjust="spacingAndGlyphs" transform="rotate(-90 487.4 270.5)" stroke="#000" stroke-width="0.35">100Ω</text>
<text x="540.8" y="274.3" font-size="14" fill="#000" font-family="Liberation Sans" textLength="35.80000000000001" lengthAdjust="spacingAndGlyphs" transform="rotate(-90 540.8 274.3)" stroke="#000" stroke-width="0.35">0.01Ω</text>
<text x="465.5" y="474.7" font-size="14" fill="#000" font-family="Liberation Sans" textLength="47.19999999999999" lengthAdjust="spacingAndGlyphs" transform="rotate(-90 465.5 474.7)" stroke="#000" stroke-width="0.35">2200μF</text>
<text x="386.0" y="206.9" font-size="14" fill="#0000ff" font-family="Liberation Sans" textLength="16.7" lengthAdjust="spacingAndGlyphs" stroke="#0000ff" stroke-width="0.5">Q1</text>
<text x="386.3" y="224.9" font-size="14" fill="#0000ff" font-family="Liberation Sans" textLength="41.3" lengthAdjust="spacingAndGlyphs" stroke="#0000ff" stroke-width="0.5">BD139</text>
<text x="485.0" y="98" font-size="14" fill="#0000ff" font-family="Liberation Sans" textLength="17.9" lengthAdjust="spacingAndGlyphs" stroke="#0000ff" stroke-width="0.5">Q2</text>
<text x="485.0" y="114.3" font-size="14" fill="#0000ff" font-family="Liberation Sans" textLength="41.5" lengthAdjust="spacingAndGlyphs" stroke="#0000ff" stroke-width="0.5">BD140</text>
<text x="565.8" y="132.4" font-size="14" fill="#0000ff" font-family="Liberation Sans" textLength="17.8" lengthAdjust="spacingAndGlyphs" stroke="#0000ff" stroke-width="0.5">Q3</text>
<text x="326.5" y="242.5" font-size="14" fill="#0000ff" font-family="Liberation Sans" textLength="15.9" lengthAdjust="spacingAndGlyphs" stroke="#0000ff" stroke-width="0.5">D1</text>
<text x="850.8" y="380.4" font-size="14" fill="#0000ff" font-family="Liberation Sans" textLength="15.1" lengthAdjust="spacingAndGlyphs" stroke="#0000ff" stroke-width="0.5">S2</text>
<text x="730.5" y="482.3" font-size="14" fill="#0000ff" font-family="Liberation Sans" textLength="15.6" lengthAdjust="spacingAndGlyphs" stroke="#0000ff" stroke-width="0.5">S3</text>
<text x="722.7" y="567" font-size="14" fill="#0000ff" font-family="Liberation Sans" textLength="34.5" lengthAdjust="spacingAndGlyphs" stroke="#0000ff" stroke-width="0.15">-U_KI</text>
<text x="755.9" y="378.7" font-size="14" fill="#0000ff" font-family="Liberation Sans" textLength="78.7" lengthAdjust="spacingAndGlyphs" font-weight="bold" stroke="#0000ff" stroke-width="0.2">Key = Space</text>
<text x="579" y="229.4" font-size="14" fill="#0000ff" font-family="Liberation Sans" textLength="84.20000000000002" lengthAdjust="spacingAndGlyphs" font-weight="bold" transform="rotate(-90 579 229.4)" stroke="#0000ff" stroke-width="0.2">IRFB4110PBF</text>
<text x="301.4" y="279.7" font-size="14" fill="#0000ff" font-family="Liberation Sans" textLength="45.69999999999999" lengthAdjust="spacingAndGlyphs" font-weight="bold" transform="rotate(-90 301.4 279.7)" stroke="#0000ff" stroke-width="0.2">1N4148</text>
<text x="766" y="545.9" font-size="14" fill="#0000ff" font-family="Liberation Sans" textLength="79.19999999999999" lengthAdjust="spacingAndGlyphs" font-weight="bold" transform="rotate(-90 766 545.9)" stroke="#0000ff" stroke-width="0.2">Key = Space</text>
<text x="724.5" y="278.5" font-size="14" fill="#ff0000" font-family="Liberation Sans" textLength="37.1" lengthAdjust="spacingAndGlyphs" stroke="#ff0000" stroke-width="0.3">+U_KI</text>
<rect x="514" y="408" width="81" height="36" fill="#808080" />
<rect x="529" y="417" width="53" height="19" fill="#000" />
<text x="533" y="429.6" font-size="11" fill="#00ff00" font-family="Liberation Sans" font-weight="bold" >10.006</text>
<text x="521.5" y="418" font-size="10" fill="#00ff00" font-family="Liberation Sans" font-weight="bold" text-anchor="middle" >+</text>
<text x="521.5" y="441" font-size="10" fill="#00ff00" font-family="Liberation Sans" font-weight="bold" text-anchor="middle" >-</text>
<text x="588" y="429.6" font-size="11" fill="#00ff00" font-family="Liberation Sans" font-weight="bold" text-anchor="middle" >V</text>
<rect x="515" y="570" width="80" height="35" fill="#808080" />
<rect x="529" y="579" width="54" height="18" fill="#000" />
<text x="533.5" y="591.7" font-size="11" fill="#00ff00" font-family="Liberation Sans" font-weight="bold" >10.016</text>
<text x="522.5" y="580" font-size="10" fill="#00ff00" font-family="Liberation Sans" font-weight="bold" text-anchor="middle" >+</text>
<text x="522.5" y="602" font-size="10" fill="#00ff00" font-family="Liberation Sans" font-weight="bold" text-anchor="middle" >-</text>
<text x="589" y="591.7" font-size="9" fill="#40c040" font-family="Liberation Sans" font-weight="bold" text-anchor="middle" >A</text>
<rect x="109" y="489" width="81" height="36" fill="#808080" />
<rect x="124" y="498" width="53" height="19" fill="#000" />
<text x="128.3" y="510.7" font-size="11" fill="#00ff00" font-family="Liberation Sans" font-weight="bold" >9.937</text>
<text x="116.5" y="500" font-size="10" fill="#00ff00" font-family="Liberation Sans" font-weight="bold" text-anchor="middle" >+</text>
<text x="116.5" y="522" font-size="10" fill="#00ff00" font-family="Liberation Sans" font-weight="bold" text-anchor="middle" >-</text>
<text x="181" y="510.7" font-size="11" fill="#00ff00" font-family="Liberation Sans" font-weight="bold" text-anchor="middle" >V</text>
<rect x="960" y="0" width="49" height="725" fill="url(#gapg)" />
<rect x="0" y="725" width="1009" height="31" fill="#f0f0f0" />
<rect x="0" y="725" width="1009" height="1" fill="#fafafa" />
<rect x="244" y="732" width="765" height="1" fill="#6a6a6a" />
<rect x="0" y="755" width="245" height="1" fill="#000000" />
<text x="-0.5" y="747.5" font-size="13" fill="#000" font-family="Liberation Sans" textLength="237" lengthAdjust="spacingAndGlyphs" stroke="#000" stroke-width="0.15">LEBEGŐFÖLDES TÁP 3xTRANZISZTOROS ELV *</text>
<path d="M244.5 755 V732.5 M498.5 732.5 V751 L496 753.5 H246" fill="none" stroke="#000" stroke-width="1"/>
<path d="M249.5 735.5 H259.5 L264.5 740.5 V750.5 H249.5 Z" fill="#fff" stroke="#000" stroke-width="1.6"/>
<path d="M259.5 735.5 V740.5 H264.5" stroke="#000" stroke-width="1" fill="none" />
<path d="M250.5 738.5 H253 M252.5 738.5 V748.5 M250.5 743.5 H252.5 M257.5 738.5 V745.5 H253" stroke="#e00" stroke-width="1.2" fill="none" />
<path d="M254 737.5 L257 739 L254 740.5 Z M253.5 745 L256.5 748.5 M256.5 745 L253.5 748.5" stroke="#000" stroke-width="1" fill="none" />
<text x="269.6" y="746.7" font-size="13" fill="#000" font-family="Liberation Sans" textLength="224" lengthAdjust="spacingAndGlyphs" stroke="#000" stroke-width="0.15">LEBEGŐFÖLDES TELJES 4xTRANZISZTOROS</text>
<rect x="1009" y="0" width="550" height="756" fill="#f0f0f0" />
<rect x="1009" y="0" width="3" height="595" fill="#a4a4a4" />
<rect x="1009" y="0" width="1" height="596" fill="#8c8c8c" />
<rect x="1012" y="0" width="544" height="593" fill="#000" />
<rect x="1011" y="593" width="547" height="1" fill="#ffffff" />
<rect x="1011" y="594" width="547" height="1" fill="#f4f4f4" />
<rect x="1556" y="0" width="1" height="595" fill="#ffffff" />
<rect x="1557" y="0" width="1" height="595" fill="#f4f4f4" />
<rect x="1009" y="595" width="550" height="1" fill="#6a6a6a" />
<rect x="1558" y="0" width="1" height="596" fill="#6a6a6a" />
<rect x="1009" y="596" width="550" height="1" fill="#fafafa" />
<path d="M1073.5 1 V585" stroke="#c8c8c8" stroke-width="1" stroke-dasharray="3 3"/>
<path d="M1126.5 1 V585" stroke="#c8c8c8" stroke-width="1" stroke-dasharray="3 3"/>
<path d="M1178.5 1 V585" stroke="#c8c8c8" stroke-width="1" stroke-dasharray="3 3"/>
<path d="M1231.5 1 V585" stroke="#c8c8c8" stroke-width="1" stroke-dasharray="3 3"/>
<path d="M1284.5 1 V585" stroke="#c8c8c8" stroke-width="1" stroke-dasharray="3 3"/>
<path d="M1337.5 1 V585" stroke="#c8c8c8" stroke-width="1" stroke-dasharray="3 3"/>
<path d="M1390.5 1 V585" stroke="#c8c8c8" stroke-width="1" stroke-dasharray="3 3"/>
<path d="M1442.5 1 V585" stroke="#c8c8c8" stroke-width="1" stroke-dasharray="3 3"/>
<path d="M1495.5 1 V585" stroke="#c8c8c8" stroke-width="1" stroke-dasharray="3 3"/>
<path d="M1020 13.5 H1548" stroke="#c8c8c8" stroke-width="1" stroke-dasharray="3 3"/>
<path d="M1020 128.5 H1548" stroke="#c8c8c8" stroke-width="1" stroke-dasharray="3 3"/>
<path d="M1020 356.5 H1548" stroke="#c8c8c8" stroke-width="1" stroke-dasharray="3 3"/>
<path d="M1020 471.5 H1548" stroke="#c8c8c8" stroke-width="1" stroke-dasharray="3 3"/>
<rect x="1020" y="585" width="529" height="1" fill="#ffffff" />
<rect x="1548" y="0" width="1" height="586" fill="#ffffff" />
<rect x="1017" y="242" width="535" height="1" fill="#ffffff" />
<rect x="1020" y="236" width="1" height="13" fill="#ffffff" />
<rect x="1031" y="239" width="1" height="8" fill="#ffffff" />
<rect x="1041" y="239" width="1" height="8" fill="#ffffff" />
<rect x="1052" y="239" width="1" height="8" fill="#ffffff" />
<rect x="1062" y="239" width="1" height="8" fill="#ffffff" />
<rect x="1073" y="236" width="1" height="13" fill="#ffffff" />
<rect x="1083" y="239" width="1" height="8" fill="#ffffff" />
<rect x="1094" y="239" width="1" height="8" fill="#ffffff" />
<rect x="1104" y="239" width="1" height="8" fill="#ffffff" />
<rect x="1115" y="239" width="1" height="8" fill="#ffffff" />
<rect x="1126" y="236" width="1" height="13" fill="#ffffff" />
<rect x="1136" y="239" width="1" height="8" fill="#ffffff" />
<rect x="1147" y="239" width="1" height="8" fill="#ffffff" />
<rect x="1157" y="239" width="1" height="8" fill="#ffffff" />
<rect x="1168" y="239" width="1" height="8" fill="#ffffff" />
<rect x="1178" y="236" width="1" height="13" fill="#ffffff" />
<rect x="1189" y="239" width="1" height="8" fill="#ffffff" />
<rect x="1200" y="239" width="1" height="8" fill="#ffffff" />
<rect x="1210" y="239" width="1" height="8" fill="#ffffff" />
<rect x="1221" y="239" width="1" height="8" fill="#ffffff" />
<rect x="1231" y="236" width="1" height="13" fill="#ffffff" />
<rect x="1242" y="239" width="1" height="8" fill="#ffffff" />
<rect x="1252" y="239" width="1" height="8" fill="#ffffff" />
<rect x="1263" y="239" width="1" height="8" fill="#ffffff" />
<rect x="1273" y="239" width="1" height="8" fill="#ffffff" />
<rect x="1284" y="236" width="1" height="13" fill="#ffffff" />
<rect x="1295" y="239" width="1" height="8" fill="#ffffff" />
<rect x="1305" y="239" width="1" height="8" fill="#ffffff" />
<rect x="1316" y="239" width="1" height="8" fill="#ffffff" />
<rect x="1326" y="239" width="1" height="8" fill="#ffffff" />
<rect x="1337" y="236" width="1" height="13" fill="#ffffff" />
<rect x="1347" y="239" width="1" height="8" fill="#ffffff" />
<rect x="1358" y="239" width="1" height="8" fill="#ffffff" />
<rect x="1368" y="239" width="1" height="8" fill="#ffffff" />
<rect x="1379" y="239" width="1" height="8" fill="#ffffff" />
<rect x="1390" y="236" width="1" height="13" fill="#ffffff" />
<rect x="1400" y="239" width="1" height="8" fill="#ffffff" />
<rect x="1411" y="239" width="1" height="8" fill="#ffffff" />
<rect x="1421" y="239" width="1" height="8" fill="#ffffff" />
<rect x="1432" y="239" width="1" height="8" fill="#ffffff" />
<rect x="1442" y="236" width="1" height="13" fill="#ffffff" />
<rect x="1453" y="239" width="1" height="8" fill="#ffffff" />
<rect x="1464" y="239" width="1" height="8" fill="#ffffff" />
<rect x="1474" y="239" width="1" height="8" fill="#ffffff" />
<rect x="1485" y="239" width="1" height="8" fill="#ffffff" />
<rect x="1495" y="236" width="1" height="13" fill="#ffffff" />
<rect x="1506" y="239" width="1" height="8" fill="#ffffff" />
<rect x="1516" y="239" width="1" height="8" fill="#ffffff" />
<rect x="1527" y="239" width="1" height="8" fill="#ffffff" />
<rect x="1537" y="239" width="1" height="8" fill="#ffffff" />
<rect x="1548" y="236" width="1" height="13" fill="#ffffff" />
<rect x="1020" y="105" width="1" height="481" fill="#00e000" />
<path d="M1020.5 105.5 H1088.5 V173.5 H1089.5 V242.5 H1220.5 V173.5 H1221.5 V105.5 H1352.5 V173.5 H1353.5 V242.5 H1484.5 V173.5 H1485.5 V105.5 H1548" stroke="#00ff00" stroke-width="1" fill="none" />
<path d="M1020 375.5 H1088.5 V334 L1089.5 334 L1089.5 306 L1090.5 312 L1091.5 318 L1093.5 324 L1095.5 329 L1097.5 332.5 L1100.5 335 L1104.5 336.5 L1110.5 338 L1118 339.5 H1220.5 V339.5 L1221.5 339.5 L1221.5 285 L1221.5 414.5 L1221.5 356 L1222.5 360 L1223.5 363 L1224.5 366 L1226.5 368.5 L1229 370 L1231.5 372 L1234.5 373.5 L1238 375.5 H1352.5 V334 L1353.5 334 L1353.5 306 L1354.5 312 L1355.5 318 L1357.5 324 L1359.5 329 L1361.5 332.5 L1364.5 335 L1368.5 336.5 L1374.5 338 L1382 339.5 H1484.5 V339.5 L1485.5 339.5 L1485.5 285 L1485.5 414.5 L1485.5 356 L1486.5 360 L1487.5 363 L1488.5 366 L1490.5 368.5 L1493 370 L1495.5 372 L1498.5 373.5 L1502 375.5 H1548" stroke="#ff0000" stroke-width="1" fill="none" stroke-linejoin="round"/>
<path d="M1017 103 L1023 103 L1020 109 Z" fill="none" stroke="#ff00ff" stroke-width="1"/>
<path d="M1020 599 L1014.5 602.5 L1020 606" stroke="#505050" stroke-width="2" fill="none" />
<rect x="1518" y="597" width="17" height="11" fill="#cdcdcd" />
<path d="M1548.5 599 L1554 602.5 L1548.5 606" stroke="#505050" stroke-width="2" fill="none" />
<rect x="1008" y="725" width="1" height="32" fill="#d8d8d8" />
<path d="M1010.5 670 V612.5 H1067.5" fill="none" stroke="#a0a0a0" stroke-width="1.5"/>
<path d="M1067.5 612.5 V669.5 H1010.5" fill="none" stroke="#ffffff" stroke-width="1"/>
<text x="1015.2" y="630.5" font-size="11" fill="#000" font-family="Liberation Sans" textLength="12" lengthAdjust="spacingAndGlyphs" >T1</text>
<text x="1015.2" y="645.3" font-size="11" fill="#000" font-family="Liberation Sans" textLength="12" lengthAdjust="spacingAndGlyphs" >T2</text>
<text x="1015.2" y="665.6" font-size="11" fill="#000" font-family="Liberation Sans" textLength="27.3" lengthAdjust="spacingAndGlyphs" >T2-T1</text>
<rect x="1035.5" y="620.5" width="12" height="14" fill="#e1e1e1" stroke="#c8c8c8" stroke-width="1"/>
<rect x="1052.5" y="620.5" width="12" height="14" fill="#e1e1e1" stroke="#c8c8c8" stroke-width="1"/>
<rect x="1035.5" y="638.5" width="12" height="14" fill="#e1e1e1" stroke="#c8c8c8" stroke-width="1"/>
<rect x="1052.5" y="638.5" width="12" height="14" fill="#e1e1e1" stroke="#c8c8c8" stroke-width="1"/>
<path d="M1038 627.5 L1042.5 623 V625.5 H1046 V629.5 H1042.5 V632 Z" fill="#000"/>
<path d="M1061.5 627.5 L1057 623 V625.5 H1053.5 V629.5 H1057 V632 Z" fill="#000"/>
<path d="M1038 645.5 L1042.5 641 V643.5 H1046 V647.5 H1042.5 V650 Z" fill="#000"/>
<path d="M1061.5 645.5 L1057 641 V643.5 H1053.5 V647.5 H1057 V650 Z" fill="#000"/>
<rect x="1069" y="612" width="323" height="59" fill="#fff"/>
<path d="M1070 671 V613 H1392" fill="none" stroke="#a0a0a0" stroke-width="2"/>
<text x="1105" y="625" font-size="11" fill="#000" font-family="Liberation Sans" textLength="21" lengthAdjust="spacingAndGlyphs" text-anchor="middle" >Time</text>
<text x="1105" y="637.6" font-size="11" fill="#000" font-family="Liberation Sans" textLength="56" lengthAdjust="spacingAndGlyphs" text-anchor="middle" >672.404 ms</text>
<text x="1105" y="650.1" font-size="11" fill="#000" font-family="Liberation Sans" textLength="56" lengthAdjust="spacingAndGlyphs" text-anchor="middle" >672.404 ms</text>
<text x="1105" y="663.6" font-size="11" fill="#000" font-family="Liberation Sans" textLength="35.7" lengthAdjust="spacingAndGlyphs" text-anchor="middle" >0.000 s</text>
<text x="1185.5" y="625" font-size="11" fill="#000" font-family="Liberation Sans" textLength="52" lengthAdjust="spacingAndGlyphs" text-anchor="middle" >Channel_A</text>
<text x="1185.5" y="637.6" font-size="11" fill="#000" font-family="Liberation Sans" textLength="58" lengthAdjust="spacingAndGlyphs" text-anchor="middle" >-825.992 uV</text>
<text x="1185.5" y="650.1" font-size="11" fill="#000" font-family="Liberation Sans" textLength="58" lengthAdjust="spacingAndGlyphs" text-anchor="middle" >-825.992 uV</text>
<text x="1185.5" y="663.6" font-size="11" fill="#000" font-family="Liberation Sans" textLength="36.8" lengthAdjust="spacingAndGlyphs" text-anchor="middle" >0.000 V</text>
<text x="1264" y="625" font-size="11" fill="#000" font-family="Liberation Sans" textLength="52" lengthAdjust="spacingAndGlyphs" text-anchor="middle" >Channel_B</text>
<text x="1264" y="637.6" font-size="11" fill="#000" font-family="Liberation Sans" textLength="36.8" lengthAdjust="spacingAndGlyphs" text-anchor="middle" >6.000 V</text>
<text x="1264" y="650.1" font-size="11" fill="#000" font-family="Liberation Sans" textLength="36.8" lengthAdjust="spacingAndGlyphs" text-anchor="middle" >6.000 V</text>
<text x="1264" y="663.6" font-size="11" fill="#000" font-family="Liberation Sans" textLength="36.8" lengthAdjust="spacingAndGlyphs" text-anchor="middle" >0.000 V</text>
<rect x="1400.5" y="620.5" width="60" height="20" fill="#e1e1e1" stroke="#adadad" stroke-width="1"/>
<text x="1430.5" y="635.5" font-size="11" fill="#000" font-family="Liberation Sans" textLength="40.3" lengthAdjust="spacingAndGlyphs" text-anchor="middle" >Reverse</text>
<rect x="1400.5" y="647.5" width="60" height="20" fill="#e1e1e1" stroke="#adadad" stroke-width="1"/>
<text x="1430.5" y="662.4" font-size="11" fill="#000" font-family="Liberation Sans" textLength="24.1" lengthAdjust="spacingAndGlyphs" text-anchor="middle" >Save</text>
<text x="1469.5" y="672" font-size="11" fill="#000" font-family="Liberation Sans" textLength="54.4" lengthAdjust="spacingAndGlyphs" >Ext. trigger</text>
<circle cx="1535.7" cy="668.3" r="6" fill="#fff" stroke="#c8c8c8" stroke-width="1"/>
<path d="M1014 686.5 H1010.5 V760.5 H1141.5 V686.5 H1066" fill="none" stroke="#dcdcdc" stroke-width="1"/>
<text x="1018" y="689.4" font-size="11" fill="#000" font-family="Liberation Sans" textLength="44" lengthAdjust="spacingAndGlyphs" >Timebase</text>
<text x="1012" y="707.7" font-size="11" fill="#000" font-family="Liberation Sans" textLength="28.2" lengthAdjust="spacingAndGlyphs" >Scale:</text>
<rect x="1048.5" y="692.5" width="86" height="18" fill="#fff" stroke="#7a7a7a" stroke-width="1"/>
<text x="1053.8" y="705.9" font-size="11" fill="#000" font-family="Liberation Sans" textLength="40.4" lengthAdjust="spacingAndGlyphs" >2 ms/Div</text>
<text x="1012" y="727.1" font-size="11" fill="#000" font-family="Liberation Sans" textLength="56.6" lengthAdjust="spacingAndGlyphs" >X pos.(Div):</text>
<rect x="1073.5" y="713.5" width="61" height="19" fill="#fff" stroke="#7a7a7a" stroke-width="1"/>
<text x="1079" y="727.1" font-size="11" fill="#000" font-family="Liberation Sans" >0</text>
<rect x="1017.5" y="737.5" width="23" height="16" fill="#cce4f7" stroke="#005499" stroke-width="1"/>
<rect x="1018.5" y="738.5" width="21" height="14" fill="none" stroke="#3d8ad0" stroke-width="1" opacity=".5"/>
<text x="1029.0" y="749.9" font-size="11" fill="#000" font-family="Liberation Sans" textLength="18" lengthAdjust="spacingAndGlyphs" text-anchor="middle" >Y/T</text>
<rect x="1043.5" y="737.5" width="25" height="16" fill="#e1e1e1" stroke="#adadad" stroke-width="1"/>
<text x="1056.0" y="749.9" font-size="11" fill="#000" font-family="Liberation Sans" textLength="18.5" lengthAdjust="spacingAndGlyphs" text-anchor="middle" >Add</text>
<rect x="1073.5" y="737.5" width="25" height="16" fill="#e1e1e1" stroke="#adadad" stroke-width="1"/>
<text x="1086.0" y="749.9" font-size="11" fill="#000" font-family="Liberation Sans" textLength="17" lengthAdjust="spacingAndGlyphs" text-anchor="middle" >B/A</text>
<rect x="1101.5" y="737.5" width="27" height="16" fill="#e1e1e1" stroke="#adadad" stroke-width="1"/>
<text x="1115.0" y="749.9" font-size="11" fill="#000" font-family="Liberation Sans" textLength="16.7" lengthAdjust="spacingAndGlyphs" text-anchor="middle" >A/B</text>
<path d="M1145.5 686.5 H1142.5 V760.5 H1269.5 V686.5 H1202.3" fill="none" stroke="#dcdcdc" stroke-width="1"/>
<text x="1149.5" y="689.4" font-size="11" fill="#000" font-family="Liberation Sans" textLength="48.8" lengthAdjust="spacingAndGlyphs" >Channel A</text>
<text x="1144" y="707.7" font-size="11" fill="#000" font-family="Liberation Sans" textLength="28.2" lengthAdjust="spacingAndGlyphs" >Scale:</text>
<rect x="1180.5" y="692.5" width="86" height="18" fill="#fff" stroke="#7a7a7a" stroke-width="1"/>
<text x="1185.8" y="705.9" font-size="11" fill="#000" font-family="Liberation Sans" textLength="41.3" lengthAdjust="spacingAndGlyphs" >5 mV/Div</text>
<text x="1144" y="727.1" font-size="11" fill="#000" font-family="Liberation Sans" textLength="56" lengthAdjust="spacingAndGlyphs" >Y pos.(Div):</text>
<rect x="1205.5" y="713.5" width="61" height="19" fill="#fff" stroke="#7a7a7a" stroke-width="1"/>
<text x="1211.8" y="727.1" font-size="11" fill="#000" font-family="Liberation Sans" >-1</text>
<rect x="1145.5" y="737.5" width="22" height="16" fill="#cce4f7" stroke="#005499" stroke-width="1"/>
<rect x="1146.5" y="738.5" width="20" height="14" fill="none" stroke="#3d8ad0" stroke-width="1" opacity=".5"/>
<text x="1156.5" y="749.9" font-size="11" fill="#000" font-family="Liberation Sans" textLength="13.8" lengthAdjust="spacingAndGlyphs" text-anchor="middle" >AC</text>
<rect x="1170.5" y="737.5" width="24" height="16" fill="#e1e1e1" stroke="#adadad" stroke-width="1"/>
<text x="1182.5" y="749.9" font-size="11" fill="#000" font-family="Liberation Sans" text-anchor="middle" >0</text>
<rect x="1197.5" y="737.5" width="24" height="16" fill="#e1e1e1" stroke="#adadad" stroke-width="1"/>
<text x="1209.5" y="749.9" font-size="11" fill="#000" font-family="Liberation Sans" textLength="14.4" lengthAdjust="spacingAndGlyphs" text-anchor="middle" >DC</text>
<circle cx="1255" cy="744.5" r="6" fill="#fff" stroke="#c8c8c8" stroke-width="1"/>
<circle cx="1255" cy="744.5" r="3.5" fill="#cfcfcf"/>
<path d="M1274.3 686.5 H1271.5 V760.5 H1399.5 V686.5 H1330.5" fill="none" stroke="#dcdcdc" stroke-width="1"/>
<text x="1278.3" y="689.5" font-size="11" fill="#000" font-family="Liberation Sans" textLength="48.2" lengthAdjust="spacingAndGlyphs" >Channel B</text>
<text x="1272.8" y="708" font-size="11" fill="#000" font-family="Liberation Sans" textLength="28.4" lengthAdjust="spacingAndGlyphs" >Scale:</text>
<rect x="1310.5" y="692.5" width="86" height="18" fill="#fff" stroke="#7a7a7a" stroke-width="1"/>
<text x="1316" y="706.2" font-size="11" fill="#000" font-family="Liberation Sans" textLength="36.2" lengthAdjust="spacingAndGlyphs" >5  V/Div</text>
<text x="1272.8" y="726.6" font-size="11" fill="#000" font-family="Liberation Sans" textLength="56.2" lengthAdjust="spacingAndGlyphs" >Y pos.(Div):</text>
<rect x="1336.5" y="713.5" width="60" height="19" fill="#fff" stroke="#7a7a7a" stroke-width="1"/>
<text x="1342.3" y="727.5" font-size="11" fill="#000" font-family="Liberation Sans" >-0</text>
<rect x="1275.5" y="737.5" width="23" height="16" fill="#e1e1e1" stroke="#adadad" stroke-width="1"/>
<text x="1287.0" y="751.3" font-size="11" fill="#000" font-family="Liberation Sans" textLength="13" lengthAdjust="spacingAndGlyphs" text-anchor="middle" >AC</text>
<rect x="1301.5" y="737.5" width="21" height="16" fill="#e1e1e1" stroke="#adadad" stroke-width="1"/>
<text x="1312.0" y="751.3" font-size="11" fill="#000" font-family="Liberation Sans" text-anchor="middle" >0</text>
<rect x="1325.5" y="737.5" width="24" height="16" fill="#cce4f7" stroke="#005499" stroke-width="1"/>
<rect x="1326.5" y="738.5" width="22" height="14" fill="none" stroke="#3d8ad0" stroke-width="1" opacity=".5"/>
<text x="1337.5" y="751.3" font-size="11" fill="#000" font-family="Liberation Sans" textLength="13.5" lengthAdjust="spacingAndGlyphs" text-anchor="middle" >DC</text>
<rect x="1352.5" y="737.5" width="16" height="16" fill="#e1e1e1" stroke="#adadad" stroke-width="1"/>
<text x="1360.5" y="751.3" font-size="11" fill="#000" font-family="Liberation Sans" text-anchor="middle" >-</text>
<circle cx="1390.6" cy="745" r="6" fill="#fff" stroke="#c8c8c8" stroke-width="1"/>
<circle cx="1390.6" cy="745" r="3.5" fill="#cfcfcf"/>
<path d="M1405 686.5 H1401.5 V760.5 H1556.5 V686.5 H1445.5" fill="none" stroke="#dcdcdc" stroke-width="1"/>
<text x="1409" y="689.5" font-size="11" fill="#000" font-family="Liberation Sans" textLength="32.5" lengthAdjust="spacingAndGlyphs" >Trigger</text>
<text x="1404.5" y="708" font-size="11" fill="#000" font-family="Liberation Sans" textLength="27.3" lengthAdjust="spacingAndGlyphs" >Edge:</text>
<rect x="1449.5" y="696.5" width="15" height="15" fill="#cce4f7" stroke="#005499" stroke-width="1"/>
<rect x="1450.5" y="697.5" width="13" height="13" fill="none" stroke="#3d8ad0" stroke-width="1" opacity=".5"/>
<path d="M1452 708.5 H1456.5 V700.5 H1461" stroke="#000" stroke-width="1" fill="none" />
<path d="M1455 705 L1458 702" stroke="#000" stroke-width="1" fill="none" />
<rect x="1467.5" y="696.5" width="15" height="15" fill="#e1e1e1" stroke="#adadad" stroke-width="1"/>
<path d="M1470 700.5 H1474.5 V708.5 H1479" stroke="#000" stroke-width="1" fill="none" />
<path d="M1474 704 L1477 707" stroke="#000" stroke-width="1" fill="none" />
<rect x="1488.5" y="696.5" width="17" height="17" fill="#cce4f7" stroke="#005499" stroke-width="1"/>
<rect x="1489.5" y="697.5" width="15" height="15" fill="none" stroke="#3d8ad0" stroke-width="1" opacity=".5"/>
<text x="1497.0" y="709.5" font-size="11" fill="#000" font-family="Liberation Sans" text-anchor="middle" >A</text>
<rect x="1508.5" y="696.5" width="16" height="17" fill="#cccccc" stroke="#bfbfbf" stroke-width="1"/>
<text x="1516.5" y="709.5" font-size="11" fill="#838383" font-family="Liberation Sans" text-anchor="middle" >B</text>
<rect x="1527.5" y="696.5" width="21" height="17" fill="#cccccc" stroke="#bfbfbf" stroke-width="1"/>
<text x="1538.0" y="709.5" font-size="11" fill="#838383" font-family="Liberation Sans" textLength="16.3" lengthAdjust="spacingAndGlyphs" text-anchor="middle" >Ext</text>
<text x="1404.5" y="726.6" font-size="11" fill="#000" font-family="Liberation Sans" textLength="28.8" lengthAdjust="spacingAndGlyphs" >Level:</text>
<rect x="1448.5" y="716.5" width="69" height="19" fill="#fff" stroke="#7a7a7a" stroke-width="1"/>
<text x="1453.7" y="729.7" font-size="11" fill="#000" font-family="Liberation Sans" >0</text>
<rect x="1517.5" y="716.5" width="32" height="19" fill="#fff" stroke="#7a7a7a" stroke-width="1"/>
<text x="1523.2" y="729.7" font-size="11" fill="#000" font-family="Liberation Sans" >V</text>
<rect x="1406.5" y="737.5" width="36" height="16" fill="#e1e1e1" stroke="#adadad" stroke-width="1"/>
<text x="1424.5" y="749.8" font-size="11" fill="#000" font-family="Liberation Sans" textLength="26.9" lengthAdjust="spacingAndGlyphs" text-anchor="middle" >Single</text>
<rect x="1445.5" y="737.5" width="40" height="16" fill="#e1e1e1" stroke="#adadad" stroke-width="1"/>
<text x="1465.5" y="749.8" font-size="11" fill="#000" font-family="Liberation Sans" textLength="33" lengthAdjust="spacingAndGlyphs" text-anchor="middle" >Normal</text>
<rect x="1488.5" y="737.5" width="29" height="16" fill="#e1e1e1" stroke="#adadad" stroke-width="1"/>
<text x="1503.0" y="749.8" font-size="11" fill="#000" font-family="Liberation Sans" textLength="22.6" lengthAdjust="spacingAndGlyphs" text-anchor="middle" >Auto</text>
<rect x="1520.5" y="737.5" width="31" height="16" fill="#cce4f7" stroke="#005499" stroke-width="1"/>
<rect x="1521.5" y="738.5" width="29" height="14" fill="none" stroke="#3d8ad0" stroke-width="1" opacity=".5"/>
<text x="1536.0" y="749.8" font-size="11" fill="#000" font-family="Liberation Sans" textLength="24.7" lengthAdjust="spacingAndGlyphs" text-anchor="middle" >None</text>
<rect x="748" y="0" width="218" height="236" fill="#000" opacity=".08" filter="url(#sh)"/>
<rect x="753" y="0" width="207" height="230" fill="#f0f0f0" />
<rect x="753" y="0" width="207" height="23" fill="#ffffff" />
<path d="M752.5 0 V230.5 H960" fill="none" stroke="#a8a8a8" stroke-width="1"/>
<rect x="959" y="0" width="1" height="230" fill="#fcfcfc" />
<text x="761.3" y="13" font-size="12" fill="#9a9a9a" font-family="Liberation Sans" textLength="131.7" lengthAdjust="spacingAndGlyphs" >Function generator-XFG1</text>
<path d="M940.5 3.5 L950.5 13.5 M950.5 3.5 L940.5 13.5" stroke="#888" stroke-width="1" fill="none" />
<path d="M761 32.5 H757.5 V230.5 H955.5 V32.5 H823" fill="none" stroke="#dcdcdc" stroke-width="1"/>
<text x="765" y="35.8" font-size="11" fill="#000" font-family="Liberation Sans" textLength="54" lengthAdjust="spacingAndGlyphs" >Waveforms</text>
<path d="M757 67.5 H761 M834 67.5 H955" stroke="#dcdcdc" stroke-width="1"/>
<text x="765" y="71.5" font-size="11" fill="#000" font-family="Liberation Sans" textLength="65" lengthAdjust="spacingAndGlyphs" >Signal options</text>
<path d="M757.5 67 V186.5 H954.5 V67" fill="none" stroke="#dcdcdc" stroke-width="1"/>
<rect x="754" y="187" width="205" height="43" fill="#f0f0f0" />
<rect x="767.5" y="42.5" width="57" height="15" fill="#e1e1e1" stroke="#adadad" stroke-width="1"/>
<rect x="829.5" y="42.5" width="57" height="15" fill="#e1e1e1" stroke="#adadad" stroke-width="1"/>
<rect x="890.5" y="42.5" width="57" height="15" fill="#cce4f7" stroke="#005499" stroke-width="1"/>
<rect x="891.5" y="43.5" width="55" height="13" fill="none" stroke="#3d8ad0" stroke-width="1" opacity=".5"/>
<path d="M774 51 C777 46 784 46 788 49 L792 52.5 H797 L801 49 C805 46 813 46 818.5 51" stroke="#000" stroke-width="1" fill="none" />
<path d="M835 52.5 L845 47 L854.5 52.5 L864 47 L873.5 52.5 L880 49" stroke="#000" stroke-width="1" fill="none" />
<path d="M896 52.5 H905.5 V47.5 H914.5 V52.5 H923.5 V47.5 H932.5 V52.5 H941" stroke="#000" stroke-width="1" fill="none" />
<text x="767.6" y="90.6" font-size="11" fill="#000" font-family="Liberation Sans" textLength="54.5" lengthAdjust="spacingAndGlyphs" >Frequency:</text>
<rect x="832.5" y="77.5" width="74" height="19" fill="#fff" stroke="#7a7a7a" stroke-width="1"/>
<rect x="907.5" y="77.5" width="43" height="19" fill="#fff" stroke="#7a7a7a" stroke-width="1"/>
<text x="838.5" y="90.6" font-size="11" fill="#000" font-family="Liberation Sans" >100</text>
<text x="914.8" y="90.6" font-size="11" fill="#000" font-family="Liberation Sans" >Hz</text>
<text x="767.6" y="110.7" font-size="11" fill="#000" font-family="Liberation Sans" textLength="52.8" lengthAdjust="spacingAndGlyphs" >Duty cycle:</text>
<rect x="832.5" y="97.5" width="74" height="18" fill="#fff" stroke="#7a7a7a" stroke-width="1"/>
<rect x="907.5" y="97.5" width="43" height="18" fill="#fff" stroke="#7a7a7a" stroke-width="1"/>
<text x="838.5" y="110.7" font-size="11" fill="#000" font-family="Liberation Sans" >50</text>
<text x="914.8" y="110.7" font-size="11" fill="#000" font-family="Liberation Sans" >%</text>
<text x="767.6" y="130" font-size="11" fill="#000" font-family="Liberation Sans" textLength="49.9" lengthAdjust="spacingAndGlyphs" >Amplitude:</text>
<rect x="832.5" y="116.5" width="74" height="19" fill="#fff" stroke="#7a7a7a" stroke-width="1"/>
<rect x="907.5" y="116.5" width="43" height="19" fill="#fff" stroke="#7a7a7a" stroke-width="1"/>
<text x="838.5" y="130" font-size="11" fill="#000" font-family="Liberation Sans" >3</text>
<text x="914.8" y="130" font-size="11" fill="#000" font-family="Liberation Sans" >Vp</text>
<text x="767.6" y="149.7" font-size="11" fill="#000" font-family="Liberation Sans" textLength="34" lengthAdjust="spacingAndGlyphs" >Offset:</text>
<rect x="832.5" y="136.5" width="74" height="18" fill="#fff" stroke="#7a7a7a" stroke-width="1"/>
<rect x="907.5" y="136.5" width="43" height="18" fill="#fff" stroke="#7a7a7a" stroke-width="1"/>
<text x="838.5" y="149.7" font-size="11" fill="#000" font-family="Liberation Sans" >3</text>
<text x="914.8" y="149.7" font-size="11" fill="#000" font-family="Liberation Sans" >V</text>
<rect x="793.5" y="161.5" width="121" height="20" fill="#e1e1e1" stroke="#adadad" stroke-width="1"/>
<text x="854.0" y="175.6" font-size="11" fill="#000" font-family="Liberation Sans" textLength="78.1" lengthAdjust="spacingAndGlyphs" text-anchor="middle" >Set rise/Fall time</text>
<text x="854.8" y="204" font-size="11" fill="#000" font-family="Liberation Sans" textLength="40.3" lengthAdjust="spacingAndGlyphs" text-anchor="middle" >Common</text>
<text x="779" y="207" font-size="12" fill="#000" font-family="Liberation Sans" text-anchor="middle" >+</text>
<text x="930.5" y="208" font-size="12" fill="#000" font-family="Liberation Sans" text-anchor="middle" >−</text>
<circle cx="778.4" cy="214.4" r="6" fill="#fff" stroke="#c8c8c8" stroke-width="1"/>
<circle cx="778.4" cy="214.4" r="3.5" fill="#cfcfcf"/>
<circle cx="849.4" cy="214.4" r="6" fill="#fff" stroke="#c8c8c8" stroke-width="1"/>
<circle cx="849.4" cy="214.4" r="3.5" fill="#cfcfcf"/>
<circle cx="930.4" cy="216" r="6" fill="#fff" stroke="#c8c8c8" stroke-width="1"/>
<rect x="1556" y="745" width="2" height="2" fill="#b8b8b8" />
<rect x="1552" y="749" width="2" height="2" fill="#b8b8b8" />
<rect x="1556" y="749" width="2" height="2" fill="#b8b8b8" />
<rect x="1548" y="753" width="2" height="2" fill="#b8b8b8" />
<rect x="1552" y="753" width="2" height="2" fill="#b8b8b8" />
<rect x="1556" y="753" width="2" height="2" fill="#b8b8b8" />
<rect x="957" y="219" width="2" height="2" fill="#8c8c8c" />
<rect x="953" y="223" width="2" height="2" fill="#8c8c8c" />
<rect x="957" y="223" width="2" height="2" fill="#8c8c8c" />
<rect x="949" y="227" width="2" height="2" fill="#8c8c8c" />
<rect x="953" y="227" width="2" height="2" fill="#8c8c8c" />
<rect x="957" y="227" width="2" height="2" fill="#8c8c8c" />
<rect x="961" y="-6" width="368" height="118" fill="#000" opacity=".18" filter="url(#sh)"/>
<rect x="967" y="0" width="1" height="106" fill="#454545" />
<rect x="968" y="105" width="356" height="1" fill="#000" opacity=".55"/>
<rect x="968" y="0" width="355" height="105" fill="#ffffff" />
<rect x="969" y="0" width="353" height="104" fill="#f0f0f0" />
<rect x="969" y="0" width="353" height="23" fill="#ffffff" />
<text x="976" y="11.6" font-size="12" fill="#000" font-family="Liberation Sans" textLength="92" lengthAdjust="spacingAndGlyphs" >Set Rise/Fall Time</text>
<path d="M1302.5 2.5 L1313.5 13.5 M1313.5 2.5 L1302.5 13.5" stroke="#000" stroke-width="1" fill="none" />
<text x="982.5" y="49.5" font-size="11" fill="#000" font-family="Liberation Sans" textLength="230" lengthAdjust="spacingAndGlyphs" >Rise/Fall Time: (1.00000e-009 -- 5.00000e-003)</text>
<rect x="983.5" y="55.5" width="178" height="22" fill="#fff" stroke="#7a7a7a" stroke-width="1"/>
<text x="989.8" y="68.4" font-size="11" fill="#000" font-family="Liberation Sans" >1</text>
<rect x="1161.5" y="55.5" width="56" height="22" fill="#fff" stroke="#7a7a7a" stroke-width="1"/>
<text x="1168" y="67.5" font-size="11" fill="#000" font-family="Liberation Sans" >μsec</text>
<rect x="1232" y="26" width="71" height="16" fill="#e1e1e1" stroke="#0078d7" stroke-width="2"/>
<text x="1267.5" y="38.4" font-size="11" fill="#000" font-family="Liberation Sans" textLength="36" lengthAdjust="spacingAndGlyphs" text-anchor="middle" >Default</text>
<rect x="1231.5" y="51.5" width="72" height="17" fill="#e1e1e1" stroke="#adadad" stroke-width="1"/>
<text x="1267.5" y="64" font-size="11" fill="#000" font-family="Liberation Sans" text-anchor="middle" >OK</text>
<rect x="1231.5" y="77.5" width="72" height="17" fill="#e1e1e1" stroke="#adadad" stroke-width="1"/>
<text x="1267.5" y="90" font-size="11" fill="#000" font-family="Liberation Sans" textLength="32" lengthAdjust="spacingAndGlyphs" text-anchor="middle" >Cancel</text>
<rect x="1321" y="94" width="2" height="2" fill="#8c8c8c" />
<rect x="1317" y="98" width="2" height="2" fill="#8c8c8c" />
<rect x="1321" y="98" width="2" height="2" fill="#8c8c8c" />
<rect x="1313" y="102" width="2" height="2" fill="#8c8c8c" />
<rect x="1317" y="102" width="2" height="2" fill="#8c8c8c" />
<rect x="1321" y="102" width="2" height="2" fill="#8c8c8c" /></svg></body></html>
